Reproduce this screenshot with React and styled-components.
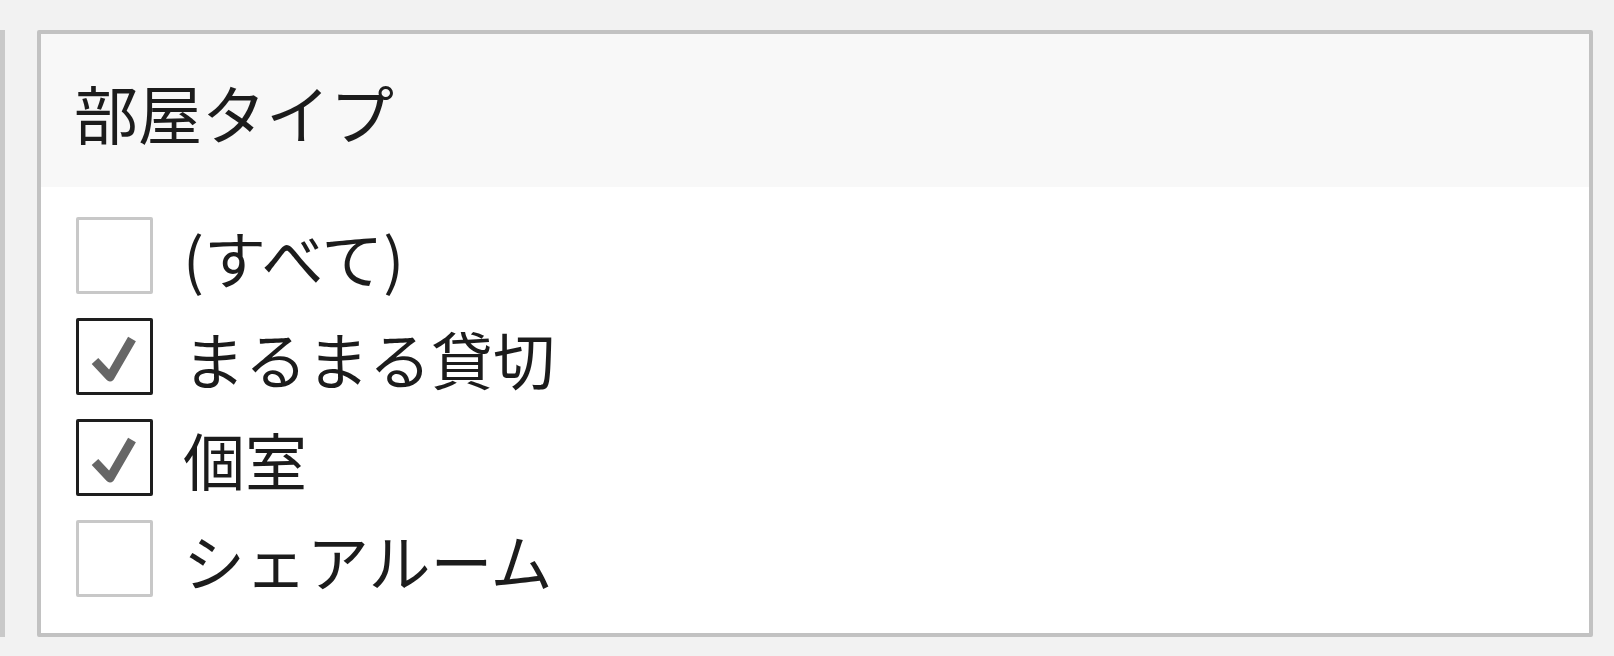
import React from "react";
import styled, { createGlobalStyle } from "styled-components";

const GlobalStyle = createGlobalStyle`
  html, body {
    margin: 0;
    padding: 0;
    background: #f2f2f2;
    font-family: "Noto Sans CJK JP", "Noto Sans", sans-serif;
    color: #222;
  }
`;

const Page = styled.div`
  display: flex;
  align-items: stretch;
  padding: 30px 21px 19px 0;
  gap: 32px;
  height: 656px;
  box-sizing: border-box;
`;

const Sliver = styled.div`
  width: 5px;
  background: #c9c9c9;
  flex-shrink: 0;
`;

const Panel = styled.section`
  flex: 1;
  border: 4px solid #c2c2c2;
  border-radius: 2px;
  background: #fff;
  display: flex;
  flex-direction: column;
`;

const Header = styled.div`
  height: 153px;
  background: #f8f8f8;
  display: flex;
  align-items: center;
  padding-left: 33px;
`;

const Title = styled.h2`
  margin: 0;
  font-size: 64px;
  font-weight: 400;
  line-height: 1;
  color: #1c1c1c;
`;

const List = styled.ul`
  list-style: none;
  margin: 0;
  padding: 18px 0 0 35px;
`;

const Row = styled.li`
  height: 101px;
  display: flex;
  align-items: center;
  gap: 30px;
`;

const Box = styled.span`
  width: 77px;
  height: 77px;
  box-sizing: border-box;
  border: 3px solid ${(p) => (p.checked ? "#1e1e1e" : "#c8c8c8")};
  border-radius: 2px;
  background: #fff;
  display: flex;
  flex-shrink: 0;
`;

const Label = styled.span`
  font-size: 62px;
  line-height: 1;
  color: #1c1c1c;
  padding-top: 2px;
`;

const Check = () => (
  <svg width="71" height="71" viewBox="0 0 71 71">
    <path
      d="M16 40 L31 56 L53 18"
      fill="none"
      stroke="#666"
      strokeWidth="9"
      strokeLinejoin="round"
    />
  </svg>
);

const items = [
  { label: "(すべて)", checked: false },
  { label: "まるまる貸切", checked: true },
  { label: "個室", checked: true },
  { label: "シェアルーム", checked: false },
];

export default function App() {
  return (
    <>
      <GlobalStyle />
      <Page>
        <Sliver />
        <Panel>
          <Header>
            <Title>部屋タイプ</Title>
          </Header>
          <List>
            {items.map((it) => (
              <Row key={it.label}>
                <Box checked={it.checked}>{it.checked && <Check />}</Box>
                <Label>{it.label}</Label>
              </Row>
            ))}
          </List>
        </Panel>
      </Page>
    </>
  );
}
